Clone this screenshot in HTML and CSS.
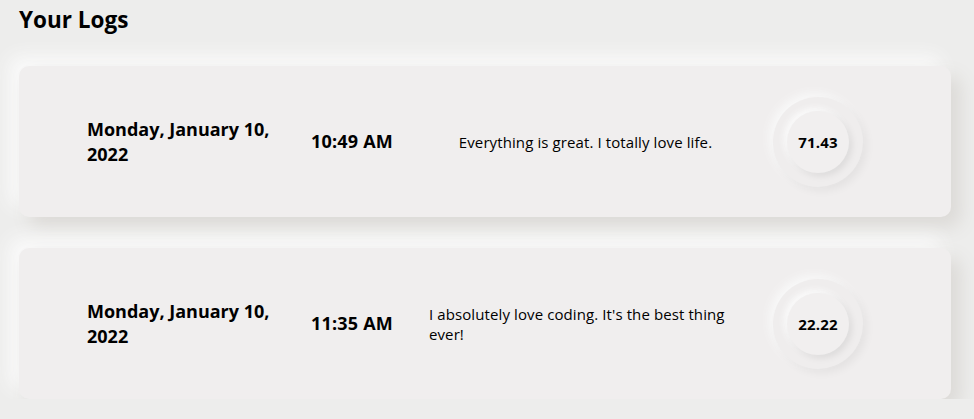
FILE: index.html
```html
<!DOCTYPE html>
<html lang="en">
<head>
<meta charset="utf-8">
<title>Your Logs</title>
<link rel="stylesheet" href="styles.css">
</head>
<body>
<main class="page">
  <h1 class="title">Your Logs</h1>
  <section class="logs">
    <article class="log">
      <p class="log-date">Monday, January 10, 2022</p>
      <p class="log-time">10:49 AM</p>
      <div class="log-text"><p>Everything is great. I totally love life.</p></div>
      <div class="score"><div class="score-inner">71.43</div></div>
    </article>
    <article class="log">
      <p class="log-date">Monday, January 10, 2022</p>
      <p class="log-time">11:35 AM</p>
      <div class="log-text"><p>I absolutely love coding. It's the best thing ever!</p></div>
      <div class="score"><div class="score-inner">22.22</div></div>
    </article>
  </section>
</main>
</body>
</html>
```

FILE: styles.css
```css
* { box-sizing: border-box; }
html, body {
  margin: 0;
  background: #ededec;
}
body {
  font-family: "Open Sans", "Noto Sans", sans-serif;
  color: #000;
}
.page {
  padding: 0 23px 0 19px;
}
.title {
  margin: 0;
  padding-top: 4px;
  font-size: 22.5px;
  font-weight: 700;
  line-height: 31px;
}
.logs {
  display: flex;
  flex-direction: column;
  gap: 31px;
  margin-top: 31px;
}
.log {
  display: grid;
  grid-template-columns: 224px 118px 313px 90px;
  align-items: center;
  height: 151px;
  padding-left: 68px;
  background: #f0eeee;
  border-radius: 10px;
  box-shadow: 10px 10px 18px #dcdad7, -10px -10px 18px #fafafa;
}
.log p { margin: 0; }
.log-date {
  width: 205px;
  font-size: 18px;
  font-weight: 700;
  line-height: 25px;
}
.log-time {
  font-size: 18px;
  font-weight: 700;
  line-height: 25px;
  letter-spacing: 0.2px;
}
.log-text {
  display: flex;
  justify-content: center;
  font-size: 15px;
  line-height: 20px;
  letter-spacing: 0.1px;
}
.score {
  width: 90px;
  height: 90px;
  border-radius: 50%;
  margin-left: 31px;
  display: flex;
  align-items: center;
  justify-content: center;
  background: #efeded;
  box-shadow: 4px 4px 8px rgba(0,0,0,0.05), -4px -4px 8px #f8f8f8;
}
.score-inner {
  width: 62px;
  height: 62px;
  border-radius: 50%;
  display: flex;
  align-items: center;
  justify-content: center;
  background: #f1efef;
  box-shadow: 3px 3px 7px rgba(0,0,0,0.08), -3px -3px 6px #fbfbfb;
  font-size: 15px;
  font-weight: 700;
  letter-spacing: 0.2px;
}
```
